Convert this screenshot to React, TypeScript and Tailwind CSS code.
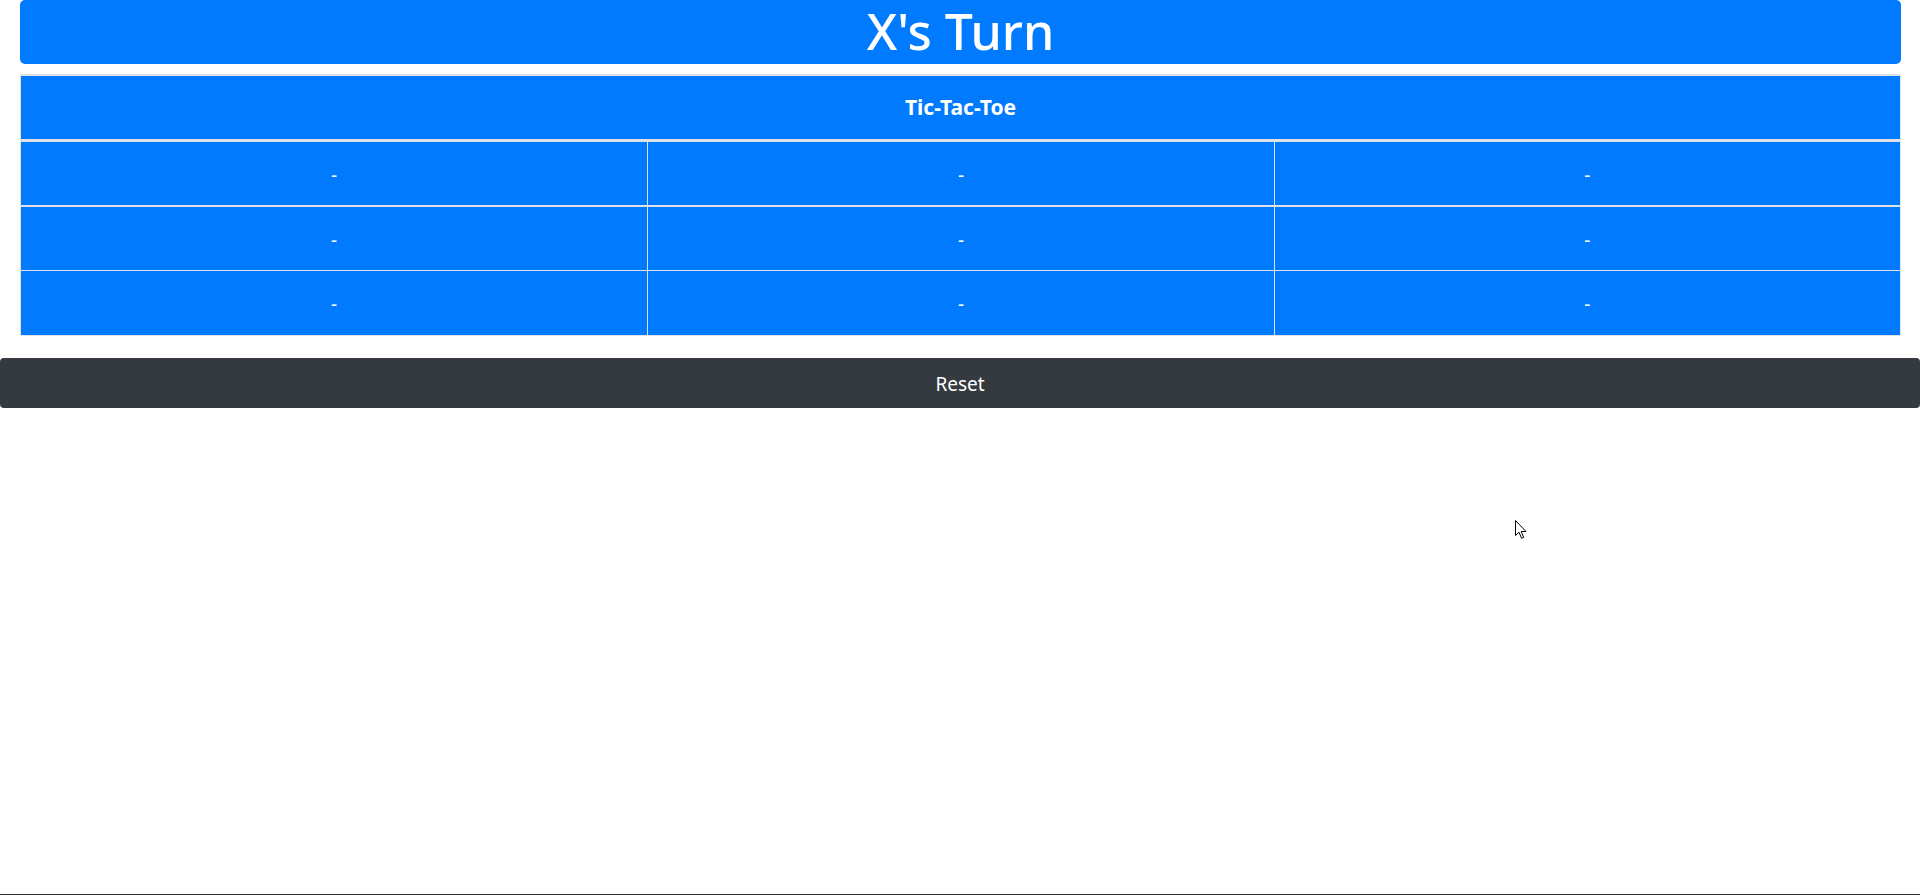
import React from "react";

const font = { fontFamily: '"Noto Sans", "Open Sans", sans-serif' };

function Cell({ first }: { first?: boolean }) {
  return (
    <div
      className={`flex items-center justify-center pt-[3px] text-white text-[19px] ${first ? "" : "border-l border-[#dee2e6]"}`}
    >
      -
    </div>
  );
}

function Row({ h, bottom }: { h: string; bottom: string }) {
  return (
    <div className={`grid grid-cols-3 ${h} ${bottom} border-[#dee2e6] bg-[#007bff]`}>
      <Cell first />
      <Cell />
      <Cell />
    </div>
  );
}

export default function App() {
  return (
    <div className="relative h-[895px] bg-white flex flex-col border-b border-[#333]" style={font}>
      <div className="px-[20px] pr-[19px]">
        <div className="h-[64px] rounded-[5px] bg-[#007bff] flex items-center justify-center">
          <h1 className="text-white text-[50px] leading-none font-medium pb-[2px]">X's Turn</h1>
        </div>
        <div className="mt-[10px] border-t-2 border-x border-b border-[#dee2e6]">
          <div className="h-[66px] bg-[#007bff] border-b-[3px] border-[#dee2e6] flex items-center justify-center">
            <span className="text-white font-bold text-[21px]">Tic-Tac-Toe</span>
          </div>
          <Row h="h-[65px]" bottom="border-b-2" />
          <Row h="h-[64px]" bottom="border-b" />
          <Row h="h-[64px]" bottom="" />
        </div>
      </div>
      <button className="mt-[22px] mx-0 h-[50px] w-[1920px] rounded-[4px] bg-[#343a40] text-white text-[19px] flex items-center justify-center pt-[2px]">
        Reset
      </button>
      <svg
        className="absolute left-[1515px] top-[520px]"
        width="13"
        height="20"
        viewBox="0 0 13 20"
      >
        <path
          d="M0.5 0.5 L0.5 15.5 L4 12.2 L6.6 18.3 L8.7 17.4 L6.2 11.5 L11 11.5 Z"
          fill="white"
          stroke="black"
          strokeWidth="1"
          strokeLinejoin="miter"
        />
      </svg>
    </div>
  );
}
